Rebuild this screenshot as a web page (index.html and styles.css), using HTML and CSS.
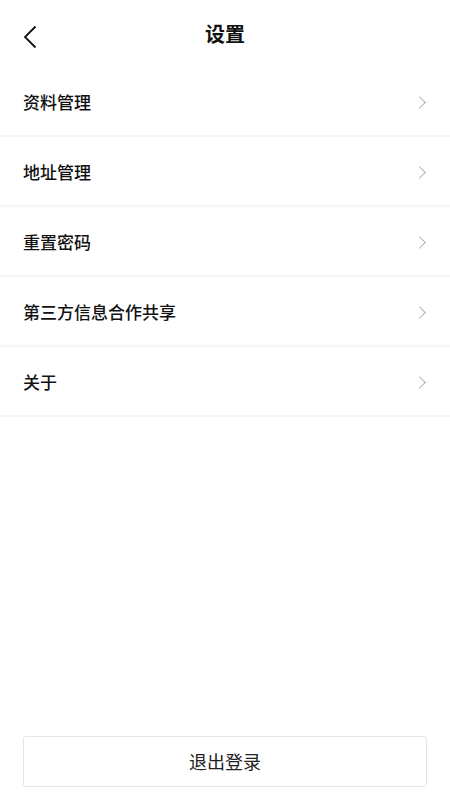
FILE: index.html
```html
<!DOCTYPE html>
<html lang="zh-CN">
<head>
  <meta charset="UTF-8" />
  <meta name="viewport" content="width=device-width, initial-scale=1.0"/>
  <title>设置</title>
  <link rel="stylesheet" href="styles.css">
</head>
<body>
  <div class="page">
    <div class="header">
      <a class="back">
        <svg width="14" height="24" viewBox="0 0 14 24"><path d="M12.5 1.5 L2 12 L12.5 22.5" fill="none" stroke="#111" stroke-width="1.8"/></svg>
      </a>
      <h1>设置</h1>
    </div>
    <ul class="menu">
      <li><span>资料管理</span><i class="arrow"></i></li>
      <li><span>地址管理</span><i class="arrow"></i></li>
      <li><span>重置密码</span><i class="arrow"></i></li>
      <li><span>第三方信息合作共享</span><i class="arrow"></i></li>
      <li><span>关于</span><i class="arrow"></i></li>
    </ul>
    <div class="footer">
      <button class="logout">退出登录</button>
    </div>
  </div>
</body>
</html>
```

FILE: styles.css
```css
body { margin: 0; background: #fff; font-family: "Noto Sans CJK SC", "Noto Sans", sans-serif; color: #111; }
.page { display: flex; flex-direction: column; min-height: 100vh; }
.header { position: relative; height: 67px; display: flex; align-items: center; justify-content: center; }
.header h1 { margin: 0; font-size: 20px; font-weight: 700; line-height: 1; }
.back { position: absolute; left: 23px; top: 25px; display: block; width: 14px; height: 24px; }
.menu { list-style: none; margin: 0; padding: 0; }
.menu li { height: 68px; display: flex; align-items: center; justify-content: space-between; padding: 0 23px; border-bottom: 2px solid #f6f6f6; font-size: 17px; font-weight: 500; }
.arrow { width: 8px; height: 8px; border-top: 1.6px solid #b0b0b4; border-right: 1.6px solid #b0b0b4; transform: rotate(45deg); margin: 2px 3px 0 0; }
.footer { margin-top: auto; padding: 0 23px 13px; }
.logout { width: 100%; height: 51px; background: #fff; border: 1px solid #e4e4ea; border-radius: 3px; font-family: inherit; font-size: 18px; color: #222; padding: 0 0 2px; }
```
